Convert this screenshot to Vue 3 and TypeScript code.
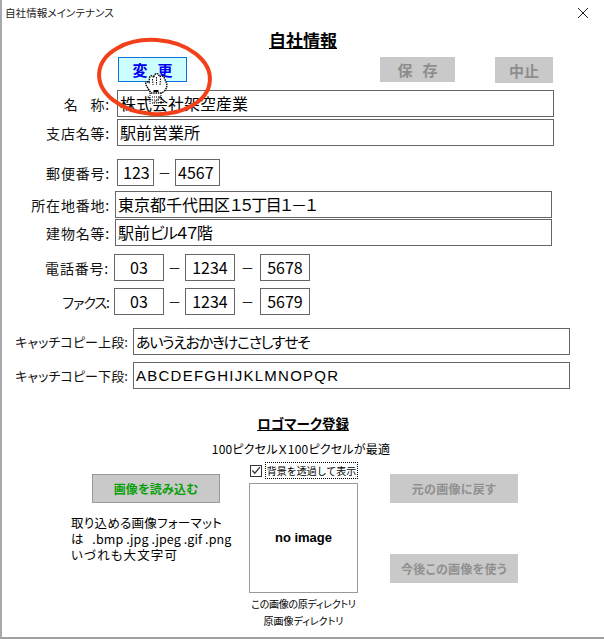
<script setup lang="ts">
const phones = [
  { label: '電話番号:', parts: ['03', '1234', '5678'] },
  { label: 'ファクス:', parts: ['03', '1234', '5679'] },
]
</script>

<template>
  <div class="win">
    <div class="titlebar">
      <span class="title-text">自社情報メインテナンス</span>
      <svg class="close" width="12" height="12" viewBox="0 0 12 12"><path d="M1 1 L11 11 M11 1 L1 11" stroke="#222" stroke-width="1" fill="none" /></svg>
    </div>

    <h1 class="heading">自社情報</h1>

    <div class="actions">
      <div class="btn btn-change">変&nbsp;&nbsp;&nbsp;更</div>
      <div class="btn btn-save">保&nbsp;&nbsp;&nbsp;存</div>
      <div class="btn btn-stop">中止</div>
    </div>

    <div class="row row-name">
      <span class="lbl lbl-a">名<span class="gap"></span>称:</span>
      <div class="field wide">株式会社架空産業</div>
    </div>
    <div class="row row-tight">
      <span class="lbl lbl-a">支店名等:</span>
      <div class="field wide">駅前営業所</div>
    </div>

    <div class="row row-postal">
      <span class="lbl lbl-a">郵便番号:</span>
      <div class="field postal-a">123</div>
      <span class="dash dash-p">－</span>
      <div class="field postal-b">4567</div>
    </div>

    <div class="row row-addr">
      <span class="lbl lbl-b">所在地番地:</span>
      <div class="field wide">東京都千代田区<span class="addr-tail">１５丁目１－１</span></div>
    </div>
    <div class="row row-bldg">
      <span class="lbl lbl-b">建物名等:</span>
      <div class="field wide">駅前<span class="bldg-tail">ビル４７階</span></div>
    </div>

    <div v-for="(p, i) in phones" :key="p.label" class="row" :class="i === 0 ? 'row-tel' : 'row-fax'">
      <span class="lbl lbl-c" :class="{ 'lbl-fax': i === 1 }">{{ p.label }}</span>
      <div class="field tel">{{ p.parts[0] }}</div>
      <span class="dash dash-1">－</span>
      <div class="field tel">{{ p.parts[1] }}</div>
      <span class="dash dash-2">－</span>
      <div class="field tel">{{ p.parts[2] }}</div>
    </div>

    <div class="row row-copy1">
      <span class="lbl lbl-d">キャッチコピー上段:</span>
      <div class="field wide kana">あいうえおかきけこさしすせそ</div>
    </div>
    <div class="row row-copy2">
      <span class="lbl lbl-d">キャッチコピー下段:</span>
      <div class="field wide latin">ABCDEFGHIJKLMNOPQR</div>
    </div>

    <h2 class="subheading">ロゴマーク登録</h2>
    <p class="hint">100ピクセルＸ100ピクセルが最適</p>

    <div class="check-row">
      <span class="checkbox">
        <svg width="11" height="11" viewBox="0 0 11 11"><path d="M1.5 5.5 L4.2 8.5 L9.8 1.8" stroke="#333" stroke-width="1.4" fill="none" /></svg>
      </span>
      <span class="check-label">背景を透過して表示</span>
    </div>

    <div class="logo-area">
      <div class="logo-left">
        <div class="btn btn-load">画像を読み込む</div>
        <div class="formats">
          <div class="fmt-1">取り込める画像フォーマット</div>
          <div class="fmt-2">は&nbsp;&nbsp;&nbsp;.bmp .jpg .jpeg .gif .png</div>
          <div class="fmt-3">いづれも大文字可</div>
        </div>
      </div>
      <div class="logo-mid">
        <div class="imagebox">no image</div>
        <div class="cap cap-1">この画像の原ディレクトリ</div>
        <div class="cap cap-2">原画像ディレクトリ</div>
      </div>
      <div class="logo-right">
        <div class="btn btn-off">元の画像に戻す</div>
        <div class="btn btn-off btn-use">今後この画像を使う</div>
      </div>
    </div>

    <svg class="ring" width="122" height="84" viewBox="0 0 122 84">
      <ellipse cx="61.5" cy="42" rx="55.5" ry="37" transform="rotate(4 61.5 42)" fill="none" stroke="#f2401a" stroke-width="4" />
    </svg>

    <svg class="hand" width="26" height="36" viewBox="0 0 26 36">
      <path d="M8 31 L15.5 31 L15.5 20 L7 20 Z" fill="#fff" fill-opacity="0.55" />
      <path d="M6 18 L6 31 M17 18 L17 31 M8 24 L15 24 M8 27 L15 27 M8 30 L15 30" stroke="#000" stroke-width="1" stroke-dasharray="1 1" fill="none" />
      <path d="M5 17 L2 12 C1 9.5 3 8 5 9.5 L5.5 5 C6 2 9 2 9.5 4.5 L10.5 2 C11.5 0 14.5 0 15 2.5 L16 3.5 C17.5 2 20 3 20.5 5.5 L22.5 10 C23.5 13 22.5 16 20 18.5 L17.5 20 L7 20 Z" fill="#fff" stroke="#000" stroke-width="1.4" stroke-dasharray="1.5 0.8" />
      <path d="M8.5 6 L9 12 M12.5 4 L12.5 12 M16.5 5.5 L16 12" stroke="#000" stroke-width="1" stroke-dasharray="1.5 1" fill="none" />
      <path d="M9.5 18 L14.5 18" stroke="#000" stroke-width="2" />
    </svg>
  </div>
</template>

<style>
html, body { margin: 0; background: #fff; }
</style>

<style scoped>
.win {
  position: relative;
  width: 604px;
  height: 639px;
  box-sizing: border-box;
  border-left: 2px solid #a8a8b0;
  border-bottom: 2px solid #a0a0a0;
  background: #fff;
  color: #000;
  font-family: "Noto Sans CJK JP", "Liberation Sans", sans-serif;
  font-feature-settings: "palt";
  overflow: hidden;
}
.titlebar {
  height: 25px;
  display: flex;
  align-items: center;
  justify-content: space-between;
  padding: 0 15px 0 3px;
}
.title-text { font-size: 10.6px; color: #222; }
.heading {
  margin: 5px 0 0;
  height: 20px;
  line-height: 20px;
  font-size: 17px;
  font-weight: 700;
  text-align: center;
  text-decoration: underline;
}
.actions {
  display: flex;
  margin: 7px 0 0 116px;
  align-items: flex-start;
}
.btn {
  display: flex;
  align-items: center;
  justify-content: center;
  box-sizing: border-box;
  font-weight: 700;
  font-size: 15px;
}
.btn-change {
  width: 69px;
  height: 25px;
  background: #ccffff;
  border: 1px solid #0a6fd6;
  color: #0000f0;
}
.btn-save {
  width: 75px;
  height: 25px;
  margin-left: 193px;
  background: #c9c9c9;
  color: #8d8d8d;
}
.btn-stop {
  width: 58px;
  height: 26px;
  margin-left: 40px;
  background: #c9c9c9;
  color: #8d8d8d;
}
.row {
  display: flex;
  align-items: center;
  height: 27px;
}
.row-name { margin-top: 7px; }
.row-tight { margin-top: 2px; }
.row-postal { margin-top: 13px; }
.row-addr { margin-top: 5px; }
.row-bldg { margin-top: 1px; }
.row-tel { margin-top: 8px; }
.row-fax { margin-top: 7px; }
.row-copy1 { margin-top: 13px; }
.row-copy2 { margin-top: 7px; }
.lbl {
  font-size: 14px;
  letter-spacing: 0.8px;
  text-align: right;
  flex: none;
  box-sizing: border-box;
  color: #111;
  white-space: nowrap;
}
.gap { display: inline-block; width: 12px; }
.lbl-a { width: 115px; padding-right: 7px; }
.lbl-b { width: 113px; padding-right: 5px; }
.lbl-c { width: 112px; padding-right: 5px; }
.lbl-fax { letter-spacing: -1px; }
.lbl-d { width: 131px; padding-right: 5px; font-size: 13px; letter-spacing: 0.1px; }
.field {
  box-sizing: border-box;
  height: 27px;
  border: 1px solid #666;
  background: #fff;
  font-size: 16px;
  line-height: 25px;
  padding-left: 2px;
  white-space: nowrap;
  overflow: hidden;
}
.wide { width: 437px; }
.addr-tail { letter-spacing: -1.5px; }
.bldg-tail { letter-spacing: -1.8px; }
.kana { font-size: 15px; letter-spacing: -1.3px; }
.latin { font-family: "Liberation Sans", sans-serif; font-size: 15px; letter-spacing: 1.25px; }
.postal-a { width: 37px; padding-left: 5px; }
.postal-b { width: 45px; }
.dash {
  flex: none;
  text-align: center;
  font-size: 13px;
  color: #222;
}
.dash-p { width: 21px; }
.dash-1 { width: 21px; }
.dash-2 { width: 25px; }
.tel { width: 50px; text-align: center; padding-left: 0; }
.subheading {
  margin: 24px 0 0;
  height: 20px;
  line-height: 20px;
  font-size: 13.5px;
  font-weight: 700;
  text-align: center;
  text-decoration: underline;
}
.hint {
  margin: 7px 0 0;
  height: 18px;
  line-height: 18px;
  font-size: 12px;
  letter-spacing: 0.2px;
  text-align: center;
  padding-right: 4px;
}
.check-row {
  display: flex;
  align-items: center;
  margin: 4px 0 0 248px;
  height: 17px;
}
.checkbox {
  box-sizing: border-box;
  width: 12px;
  height: 12px;
  border: 1px solid #333;
  background: #fff;
  display: flex;
  align-items: center;
  justify-content: center;
  flex: none;
}
.check-label {
  margin-left: 3px;
  width: 93px;
  box-sizing: border-box;
  border: 1px dotted #000;
  font-size: 10px;
  font-feature-settings: normal;
  line-height: 15px;
  white-space: nowrap;
  text-align: center;
  overflow: hidden;
}
.logo-area {
  display: flex;
  margin: -5px 0 0 90px;
  align-items: flex-start;
}
.logo-left { width: 157px; flex: none; }
.btn-load {
  width: 128px;
  height: 29px;
  background: #c9c9c9;
  border: 1px solid #999;
  color: #08a008;
  font-size: 12px;
  letter-spacing: 0.2px;
}
.formats {
  margin: 12px 0 0 -21px;
  font-size: 12.5px;
  line-height: 16px;
  white-space: nowrap;
}
.fmt-1 { letter-spacing: 0.3px; }
.fmt-2 { letter-spacing: 0.1px; }
.fmt-3 { letter-spacing: 1.1px; }
.logo-mid { width: 109px; flex: none; margin-top: 9px; }
.imagebox {
  box-sizing: border-box;
  width: 109px;
  height: 110px;
  border: 1px solid #999;
  display: flex;
  align-items: center;
  justify-content: center;
  font-family: "Liberation Sans", sans-serif;
  font-weight: 700;
  font-size: 13px;
  padding-bottom: 1px;
}
.cap {
  font-size: 10px;
  text-align: center;
  line-height: 16px;
  white-space: nowrap;
}
.cap-1 { margin-top: 3px; letter-spacing: -0.3px; }
.cap-2 { margin-top: 1px; }
.logo-right { margin-left: 32px; }
.btn-off {
  width: 128px;
  height: 29px;
  background: #c9c9c9;
  color: #8f8f8f;
  font-size: 12px;
  letter-spacing: 0.3px;
}
.btn-use { margin-top: 51px; }
.ring {
  position: absolute;
  left: 91px;
  top: 35px;
}
.hand {
  position: absolute;
  left: 142px;
  top: 73px;
}
</style>
